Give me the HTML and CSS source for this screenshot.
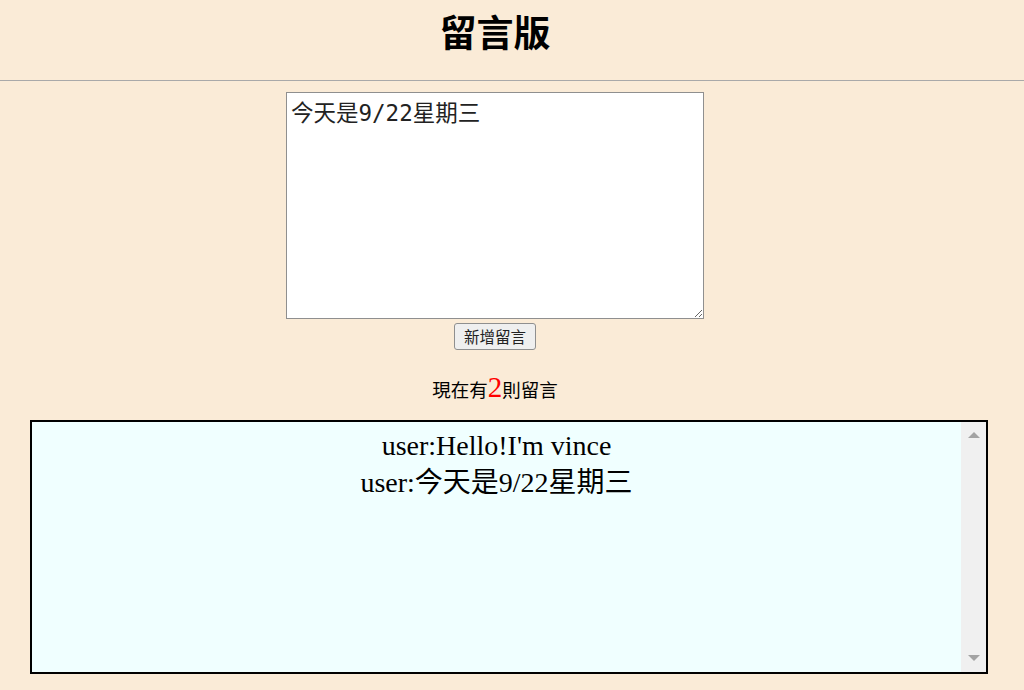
FILE: index.html
```html
<!DOCTYPE html>
<html lang="zh-Hant">
<head>
  <meta charset="UTF-8" />
  <title>留言版</title>
  <link rel="stylesheet" href="styles.css">
</head>
<body>
  <div class="header">
    <h1>留言版</h1>
  </div>

  <div class="form">
    <textarea id="msg">今天是9/22星期三</textarea>
    <button id="add">新增留言</button>
    <p class="count">現在有<span class="num">2</span>則留言</p>
  </div>

  <div class="board">
    <div class="messages">
      <div class="item">user:Hello!I'm vince</div>
      <div class="item">user:今天是9/22星期三</div>
    </div>
    <div class="scrollbar">
      <span class="arrow up"></span>
      <span class="arrow down"></span>
    </div>
  </div>
</body>
</html>
```

FILE: styles.css
```css
* {
  box-sizing: border-box;
}
body {
  margin: 0;
  background: #faebd7;
  font-family: "Noto Sans CJK TC", sans-serif;
}
.header {
  height: 81px;
  padding-right: 34px;
  border-bottom: 1px solid #a9a9a9;
  text-align: center;
}
.header h1 {
  margin: 0;
  padding-top: 6px;
  font-size: 37px;
  line-height: 50px;
  font-weight: bold;
  color: #000;
}
.form {
  padding-right: 34px;
  display: flex;
  flex-direction: column;
  align-items: center;
}
textarea {
  margin-top: 11px;
  width: 418px;
  height: 227px;
  padding: 2px 4px;
  border: 1px solid #8f8f8f;
  background: #fff;
  font-family: "DejaVu Sans Mono", "Noto Sans CJK TC", monospace;
  font-size: 22.5px;
  line-height: 36px;
  color: #222;
  resize: both;
}
button {
  margin-top: 4px;
  width: 82px;
  height: 27px;
  padding: 0;
  border: 1px solid #8f8f8f;
  border-radius: 3px;
  background: #efefef;
  font-family: "Noto Sans CJK TC", sans-serif;
  font-size: 15.5px;
  line-height: 25px;
  color: #222;
}
.count {
  margin: 23px 0 0;
  height: 47px;
  font-size: 18.5px;
  line-height: 28px;
  color: #000;
}
.num {
  font-family: "Liberation Serif", serif;
  font-size: 29px;
  color: red;
}
.board {
  display: flex;
  margin: 0 36px 0 30px;
  height: 254px;
  border: 2px solid #000;
  background: #f0ffff;
}
.messages {
  flex: 1;
  padding-top: 5px;
  text-align: center;
  font-family: "Liberation Serif", "Noto Sans CJK TC", serif;
  font-size: 28px;
  color: #000;
}
.item {
  line-height: 37px;
}
.scrollbar {
  width: 25px;
  background: #f0f0f0;
  display: flex;
  flex-direction: column;
  justify-content: space-between;
  align-items: center;
  padding: 10px 0 11px;
}
.arrow {
  width: 0;
  height: 0;
  border-left: 6px solid transparent;
  border-right: 6px solid transparent;
}
.arrow.up {
  border-bottom: 6px solid #a3a3a3;
}
.arrow.down {
  border-top: 6px solid #a3a3a3;
}
```
